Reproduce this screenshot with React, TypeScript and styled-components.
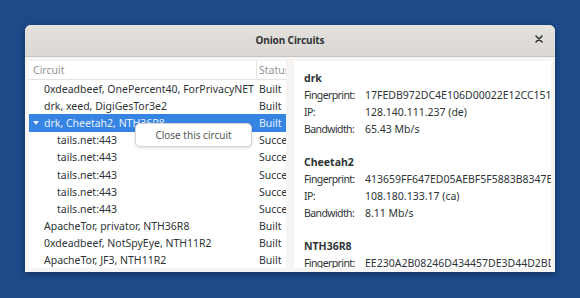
import React from 'react';
import styled, { createGlobalStyle } from 'styled-components';

const GlobalStyle = createGlobalStyle`
  html, body {
    margin: 0;
    padding: 0;
    width: 580px;
    height: 298px;
    overflow: hidden;
    font-family: 'Noto Sans', 'DejaVu Sans', sans-serif;
  }
`;

const Desktop = styled.div`
  width: 580px;
  height: 298px;
  box-sizing: border-box;
  padding: 25px 25px 26px;
  background: #1d4a89;
  display: flex;
`;

const Window = styled.div`
  flex: 1;
  display: flex;
  flex-direction: column;
  border-radius: 6px 6px 0 0;
  overflow: hidden;
  background: #f6f5f4;
  box-shadow: 0 2px 6px rgba(0, 0, 0, 0.35);
`;

const TitleBar = styled.div`
  height: 32px;
  flex: none;
  display: flex;
  align-items: center;
  justify-content: center;
  position: relative;
  background: linear-gradient(#e4e1de, #dcd8d4);
  border-bottom: 1px solid #c8c2bc;
  box-sizing: border-box;
`;

const Title = styled.span`
  font-size: 10px;
  font-weight: bold;
  letter-spacing: -0.1px;
  color: #2e3436;
  margin-top: -2px;
`;

const CloseButton = styled.button`
  position: absolute;
  right: 9px;
  top: 7px;
  width: 14px;
  height: 14px;
  padding: 0;
  border: none;
  background: transparent;
  display: flex;
  align-items: center;
  justify-content: center;
`;

const Body = styled.div`
  flex: 1;
  display: flex;
  gap: 8px;
  padding: 4px;
  min-height: 0;
`;

const Tree = styled.div`
  width: 257px;
  flex: none;
  background: #fff;
  overflow: hidden;
  position: relative;
  font-size: 10.5px;
  color: #2e3436;
`;

const HeaderRow = styled.div`
  display: grid;
  grid-template-columns: 227px 1fr;
  height: 19px;
  border-bottom: 1px solid #e6e3e0;
  box-sizing: border-box;
`;

const HeaderCell = styled.div<{ $divider?: boolean }>`
  display: flex;
  align-items: center;
  padding-left: ${(p) => (p.$divider ? '2px' : '4px')};
  color: #929595;
  white-space: nowrap;
  overflow: hidden;
  border-left: ${(p) => (p.$divider ? '1px solid #e6e3e0' : 'none')};
`;

const Row = styled.div<{ $selected?: boolean }>`
  display: grid;
  grid-template-columns: 227px 1fr;
  height: 17.2px;
  align-items: center;
  background: ${(p) => (p.$selected ? '#3584e4' : 'transparent')};
  color: ${(p) => (p.$selected ? '#e8f0fc' : '#2e3436')};
  white-space: nowrap;
`;

const NameCell = styled.div<{ $depth: number }>`
  display: flex;
  align-items: center;
  padding-left: ${(p) => (p.$depth ? 28 : 15)}px;
  position: relative;
  overflow: hidden;
`;

const Expander = styled.span`
  position: absolute;
  left: 4px;
  top: 50%;
  margin-top: -2px;
  width: 0;
  height: 0;
  border-left: 3.5px solid transparent;
  border-right: 3.5px solid transparent;
  border-top: 4px solid currentColor;
`;

const StatusCell = styled.div`
  padding-left: 3px;
  overflow: hidden;
`;

const Popover = styled.div`
  position: absolute;
  left: 106px;
  top: 62px;
  width: 117px;
  height: 24px;
  box-sizing: border-box;
  background: #fff;
  border: 1px solid #d8d4d0;
  border-radius: 5px;
  box-shadow: 0 1px 3px rgba(0, 0, 0, 0.15);
  display: flex;
  align-items: center;
  justify-content: center;
  font-size: 10px;
  color: #555753;
`;

const Details = styled.div`
  flex: 1;
  background: #fff;
  overflow: hidden;
  padding: 9px 0 0 10px;
  font-size: 10.5px;
  color: #2e3436;
`;

const Relay = styled.div`
  margin-bottom: 16px;
`;

const RelayName = styled.div`
  font-weight: bold;
  height: 17px;
  line-height: 17px;
`;

const InfoRow = styled.div`
  display: grid;
  grid-template-columns: 61px max-content;
  height: 17px;
  line-height: 17px;
  white-space: nowrap;
`;

const Label = styled.span`
  letter-spacing: -0.6px;
  overflow: hidden;
`;

type Circuit = {
  name: string;
  status: string;
  depth: number;
  expanded?: boolean;
  selected?: boolean;
};

const circuits: Circuit[] = [
  { name: '0xdeadbeef, OnePercent40, ForPrivacyNET', status: 'Built', depth: 0 },
  { name: 'drk, xeed, DigiGesTor3e2', status: 'Built', depth: 0 },
  { name: 'drk, Cheetah2, NTH36R8', status: 'Built', depth: 0, expanded: true, selected: true },
  { name: 'tails.net:443', status: 'Succeeded', depth: 1 },
  { name: 'tails.net:443', status: 'Succeeded', depth: 1 },
  { name: 'tails.net:443', status: 'Succeeded', depth: 1 },
  { name: 'tails.net:443', status: 'Succeeded', depth: 1 },
  { name: 'tails.net:443', status: 'Succeeded', depth: 1 },
  { name: 'ApacheTor, privator, NTH36R8', status: 'Built', depth: 0 },
  { name: '0xdeadbeef, NotSpyEye, NTH11R2', status: 'Built', depth: 0 },
  { name: 'ApacheTor, JF3, NTH11R2', status: 'Built', depth: 0 },
];

const relays = [
  { name: 'drk', fingerprint: '17FEDB972DC4E106D00022E12CC15193B1D0E5C1', ip: '128.140.111.237 (de)', bandwidth: '65.43 Mb/s' },
  { name: 'Cheetah2', fingerprint: '413659FF647ED05AEBF5F5883B8347E6A1C20F9D', ip: '108.180.133.17 (ca)', bandwidth: '8.11 Mb/s' },
  { name: 'NTH36R8', fingerprint: 'EE230A2B08246D434457DE3D44D2BDB9F0C7A311', ip: '185.220.101.36 (de)', bandwidth: '24.70 Mb/s' },
];

const App = () => (
  <>
    <GlobalStyle />
    <Desktop>
      <Window>
        <TitleBar>
          <Title>Onion Circuits</Title>
          <CloseButton aria-label="Close">
            <svg width="8" height="8" viewBox="0 0 8 8">
              <path d="M1 1L7 7M7 1L1 7" stroke="#2e3436" strokeWidth="1.6" strokeLinecap="round" />
            </svg>
          </CloseButton>
        </TitleBar>
        <Body>
          <Tree>
            <HeaderRow>
              <HeaderCell>Circuit</HeaderCell>
              <HeaderCell $divider>Status</HeaderCell>
            </HeaderRow>
            {circuits.map((c, i) => (
              <Row key={i} $selected={c.selected}>
                <NameCell $depth={c.depth}>
                  {c.expanded && <Expander />}
                  {c.name}
                </NameCell>
                <StatusCell>{c.status}</StatusCell>
              </Row>
            ))}
            <Popover>Close this circuit</Popover>
          </Tree>
          <Details>
            {relays.map((r) => (
              <Relay key={r.name}>
                <RelayName>{r.name}</RelayName>
                <InfoRow>
                  <Label>Fingerprint:</Label>
                  <span>{r.fingerprint}</span>
                </InfoRow>
                <InfoRow>
                  <Label>IP:</Label>
                  <span>{r.ip}</span>
                </InfoRow>
                <InfoRow>
                  <Label>Bandwidth:</Label>
                  <span>{r.bandwidth}</span>
                </InfoRow>
              </Relay>
            ))}
          </Details>
        </Body>
      </Window>
    </Desktop>
  </>
);

export default App;
